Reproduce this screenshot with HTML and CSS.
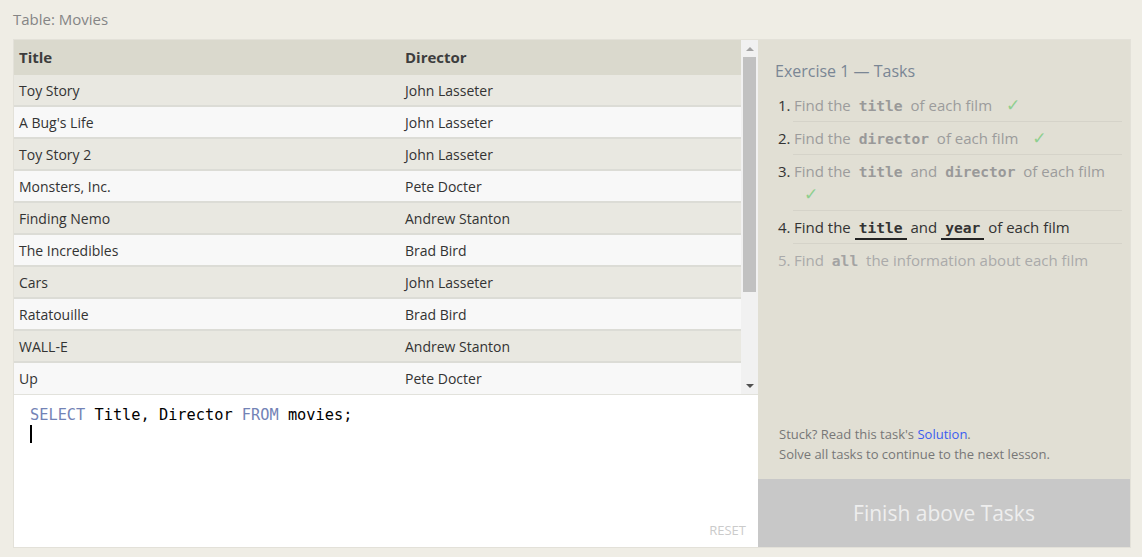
FILE: index.html
```html
<!DOCTYPE html>
<html>
<head>
<meta charset="utf-8">
<link rel="stylesheet" href="styles.css">
</head>
<body>
<div class="page">
  <div class="caption">Table: Movies</div>
  <div class="frame">
    <div class="left">
      <div class="results">
        <div class="table">
          <div class="row head"><div class="cell c1">Title</div><div class="cell">Director</div></div>
          <div class="row odd"><div class="cell c1">Toy Story</div><div class="cell">John Lasseter</div></div>
          <div class="row even"><div class="cell c1">A Bug's Life</div><div class="cell">John Lasseter</div></div>
          <div class="row odd"><div class="cell c1">Toy Story 2</div><div class="cell">John Lasseter</div></div>
          <div class="row even"><div class="cell c1">Monsters, Inc.</div><div class="cell">Pete Docter</div></div>
          <div class="row odd"><div class="cell c1">Finding Nemo</div><div class="cell">Andrew Stanton</div></div>
          <div class="row even"><div class="cell c1">The Incredibles</div><div class="cell">Brad Bird</div></div>
          <div class="row odd"><div class="cell c1">Cars</div><div class="cell">John Lasseter</div></div>
          <div class="row even"><div class="cell c1">Ratatouille</div><div class="cell">Brad Bird</div></div>
          <div class="row odd"><div class="cell c1">WALL-E</div><div class="cell">Andrew Stanton</div></div>
          <div class="row even last"><div class="cell c1">Up</div><div class="cell">Pete Docter</div></div>
        </div>
        <div class="scrollbar">
          <div class="arrow-box"><span class="arrow-up"></span></div>
          <div class="thumb"></div>
          <div class="track-rest"></div>
          <div class="arrow-box"><span class="arrow-down"></span></div>
        </div>
      </div>
      <div class="editor">
        <div class="code"><span class="kw">SELECT</span> Title, Director <span class="kw">FROM</span> movies;</div>
        <div class="code"><span class="cursor"></span></div>
        <div class="reset">RESET</div>
      </div>
    </div>
    <div class="right">
      <div class="ex-title">Exercise 1 — Tasks</div>
      <ol class="tasks">
        <li class="task done"><span class="num">1.</span><div class="body">Find the <code>title</code> of each film <span class="check">✓</span></div></li>
        <li class="task done"><span class="num">2.</span><div class="body">Find the <code>director</code> of each film <span class="check">✓</span></div></li>
        <li class="task done"><span class="num">3.</span><div class="body">Find the <code>title</code> and <code>director</code> of each film <span class="check">✓</span></div></li>
        <li class="task active"><span class="num">4.</span><div class="body">Find the <code>title</code> and <code>year</code> of each film</div></li>
        <li class="task todo"><span class="num">5.</span><div class="body">Find <code>all</code> the information about each film</div></li>
      </ol>
      <div class="help">
        <div>Stuck? Read this task's <a class="link" href="#">Solution</a>.</div>
        <div>Solve all tasks to continue to the next lesson.</div>
      </div>
      <div class="finish">Finish above Tasks</div>
    </div>
  </div>
</div>
</body>
</html>
```

FILE: styles.css
```css
html, body {
  margin: 0;
  padding: 0;
  background: #efede5;
  font-family: "Open Sans", "Noto Sans", sans-serif;
}

.page {
  padding: 0 0 0 13px;
}

.caption {
  height: 39px;
  line-height: 38px;
  font-size: 15px;
  color: #858585;
}

.frame {
  width: 1116px;
  height: 507px;
  border: 1px solid #e3e1d9;
  display: grid;
  grid-template-columns: 744px 372px;
}

.left {
  display: flex;
  flex-direction: column;
  min-width: 0;
}

.results {
  height: 354px;
  display: flex;
  overflow: hidden;
}

.table {
  flex: 1;
  display: flex;
  flex-direction: column;
}

.row {
  display: grid;
  grid-template-columns: 386px 1fr;
  height: 30px;
  border-bottom: 2px solid #dcdcd6;
  align-items: center;
  font-size: 14px;
  color: #333;
}

.row.head {
  height: 34px;
  padding-bottom: 1px;
  border-bottom: none;
  background: #dad9cd;
  font-weight: 700;
  font-size: 15px;
  color: #3d3d3d;
}

.row.odd { background: #e9e8e1; }
.row.even { background: #f8f8f8; }
.row.last { border-bottom: none; height: 31px; }

.cell {
  padding-left: 5px;
  white-space: nowrap;
}

.scrollbar {
  width: 17px;
  background: #f1f1f1;
  display: flex;
  flex-direction: column;
  align-items: center;
}

.arrow-box {
  height: 17px;
  width: 17px;
  display: flex;
  align-items: center;
  justify-content: center;
}

.arrow-up {
  width: 0;
  height: 0;
  border-left: 4px solid transparent;
  border-right: 4px solid transparent;
  border-bottom: 4px solid #a3a3a3;
}

.arrow-down {
  width: 0;
  height: 0;
  border-left: 4px solid transparent;
  border-right: 4px solid transparent;
  border-top: 4px solid #505050;
}

.thumb {
  width: 13px;
  height: 235px;
  background: #c1c1c1;
}

.track-rest {
  flex: 1;
}

.editor {
  flex: 1;
  background: #fff;
  border-top: 1px solid #e2e2dc;
  padding: 10px 12px 8px 16px;
  display: flex;
  flex-direction: column;
}

.code {
  font-family: "DejaVu Sans Mono", "Liberation Mono", monospace;
  font-size: 15.3px;
  line-height: 20px;
  height: 20px;
  color: #000;
  white-space: pre;
}

.kw { color: #7383b6; }

.cursor {
  display: block;
  width: 2px;
  height: 18px;
  margin-top: 0;
  background: #000;
}

.reset {
  margin-top: auto;
  align-self: flex-end;
  font-size: 13px;
  line-height: 18px;
  color: #cbcbcb;
}

.right {
  background: #e1dfd4;
  display: flex;
  flex-direction: column;
}

.ex-title {
  padding: 20px 0 0 17px;
  font-size: 16px;
  line-height: 22px;
  height: 22px;
  color: #7a8694;
  margin-bottom: 7px;
}

.tasks {
  list-style: none;
  margin: 0;
  padding: 0 8px 0 20px;
}

.task {
  display: flex;
  font-size: 15px;
  line-height: 23px;
}

.num {
  width: 15px;
  flex: none;
  padding-top: 5px;
  color: #333;
}

.body {
  flex: 1;
  padding: 5px 0 4px 1px;
  border-bottom: 1px solid #d5d3c9;
}

.task:last-child .body { border-bottom: none; }

.done .body { color: #9c9c9c; }
.todo .num, .todo .body { color: #aaa; }
.active .body { color: #333; }

code {
  font-family: "DejaVu Sans Mono", "Liberation Mono", monospace;
  font-weight: 700;
  font-size: 14.6px;
  line-height: 14px;
  padding: 0 4px;
}

.done code { color: #999; }
.todo code { color: #a3a3a3; }
.active code {
  color: #333;
  border-bottom: 2px solid #222;
  padding-bottom: 2px;
}

.check {
  color: #8fcf8f;
  margin-left: 10px;
  font-family: "DejaVu Sans", sans-serif;
  font-size: 17px;
  line-height: 14px;
}

.help {
  margin-top: auto;
  padding: 0 0 15px 21px;
  font-size: 13px;
  line-height: 20px;
  color: #777;
}

.link {
  color: #3a5cf0;
  text-decoration: none;
}

.finish {
  height: 68px;
  background: #c8c8c8;
  color: #eeeeee;
  font-size: 21px;
  display: flex;
  align-items: center;
  justify-content: center;
}
```
